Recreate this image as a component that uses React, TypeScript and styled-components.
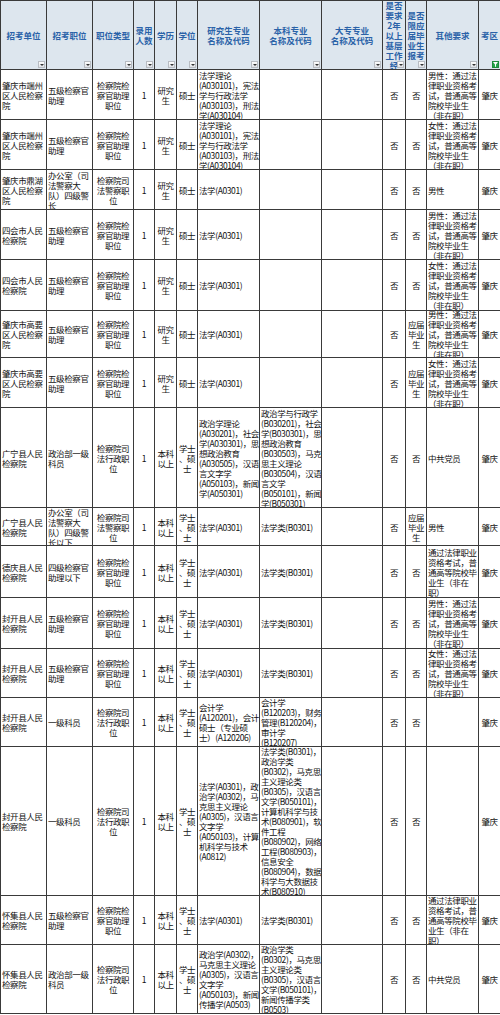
import React from "react";
import styled, { createGlobalStyle } from "styled-components";

type Align = "left" | "center";

const GlobalStyle = createGlobalStyle`
  html, body {
    margin: 0;
    padding: 0;
    background: #ffffff;
  }
`;

const Sheet = styled.table`
  width: 500px;
  table-layout: fixed;
  border-collapse: collapse;
  font-family: "Noto Sans CJK SC", "Noto Sans", sans-serif;
  font-size: 8.5px;
  letter-spacing: -0.4px;
  line-height: 10px;
  color: #111;
`;

const Col = styled.col<{ $w: number }>`
  width: ${({ $w }) => $w}px;
`;

const HeadCell = styled.th`
  padding: 0;
  border: 1px solid #3a3a3a;
  background: #dde6ee;
  color: #2a62a8;
  font-weight: 700;
  letter-spacing: 0;
`;

const HeadContent = styled.div`
  position: relative;
  height: 68px;
  display: flex;
  flex-direction: column;
  justify-content: center;
  text-align: center;
  white-space: pre;
  overflow: hidden;
`;

const FilterButton = styled.span<{ $active?: boolean }>`
  position: absolute;
  right: 1px;
  bottom: 1px;
  width: 7px;
  height: 7px;
  box-sizing: border-box;
  display: flex;
  align-items: center;
  justify-content: center;
  border: 1px solid ${({ $active }) => ($active ? "#1c8a3a" : "#b8bcc2")};
  background: ${({ $active }) =>
    $active ? "#22a449" : "linear-gradient(#fdfdfd, #dfe2e6)"};

  &::after {
    content: "";
    display: ${({ $active }) => ($active ? "none" : "block")};
    border-left: 2px solid transparent;
    border-right: 2px solid transparent;
    border-top: 2px solid #333;
  }
`;

const Cell = styled.td`
  padding: 0;
  border: 1px solid #3a3a3a;
  background: #ffffff;
`;

const CellContent = styled.div<{ $h: number; $align: Align }>`
  height: ${({ $h }) => $h - 1}px;
  padding: 0 1px;
  display: flex;
  flex-direction: column;
  justify-content: center;
  text-align: ${({ $align }) => $align};
  white-space: pre;
  overflow: hidden;
`;

const columns: { w: number; align: Align }[] = [
  { w: 46, align: "left" },
  { w: 46, align: "left" },
  { w: 41, align: "center" },
  { w: 21, align: "center" },
  { w: 22, align: "center" },
  { w: 21, align: "center" },
  { w: 62, align: "left" },
  { w: 62, align: "left" },
  { w: 61, align: "left" },
  { w: 23, align: "center" },
  { w: 21, align: "center" },
  { w: 52, align: "left" },
  { w: 22, align: "center" },
];

const headers = [
  "招考单位",
  "招考职位",
  "职位类型",
  "录用\n人数",
  "学历",
  "学位",
  "研究生专业\n名称及代码",
  "本科专业\n名称及代码",
  "大专专业\n名称及代码",
  "是否\n要求\n2年\n以上\n基层\n工作\n经",
  "是否\n限应\n届毕\n业生\n报考",
  "其他要求",
  "考区",
];

const AIDE = "五级检察官\n助理";
const AIDE_TYPE = "检察院检\n察官助理\n职位";
const POLICE_TYPE = "检察院司\n法警察职\n位";
const ADMIN_TYPE = "检察院司\n法行政职\n位";
const GRAD = "研究\n生";
const MASTER = "硕士";
const UNDERGRAD = "本科\n以上";
const DEGREES = "学士\n、硕\n士";
const LAW_A = "法学(A0301)";
const LAW_B = "法学类(B0301)";
const NO = "否";
const FRESH = "应届\n毕业\n生";
const ZQ = "肇庆";
const MALE = "男性：通过法\n律职业资格考\n试，普通高等\n院校毕业生\n（非在职）";
const FEMALE = "女性：通过法\n律职业资格考\n试，普通高等\n院校毕业生\n（非在职）";
const EXAM = "通过法律职业\n资格考试，普\n通高等院校毕\n业生（非在\n职）";
const THEORY =
  "法学理论\n(A030101)，宪法\n学与行政法学\n(A030103)，刑法\n学(A030104)";

const rows: { h: number; cells: string[] }[] = [
  {
    h: 50,
    cells: ["肇庆市端州\n区人民检察\n院", AIDE, AIDE_TYPE, "1", GRAD, MASTER, THEORY, "", "", NO, NO, MALE, ZQ],
  },
  {
    h: 50,
    cells: ["肇庆市端州\n区人民检察\n院", AIDE, AIDE_TYPE, "1", GRAD, MASTER, THEORY, "", "", NO, NO, FEMALE, ZQ],
  },
  {
    h: 40,
    cells: [
      "肇庆市鼎湖\n区人民检察\n院",
      "办公室（司\n法警察大\n队）四级警\n长",
      POLICE_TYPE, "1", GRAD, MASTER, LAW_A, "", "", NO, NO, "男性", ZQ,
    ],
  },
  {
    h: 50,
    cells: ["四会市人民\n检察院", AIDE, AIDE_TYPE, "1", GRAD, MASTER, LAW_A, "", "", NO, NO, MALE, ZQ],
  },
  {
    h: 51,
    cells: ["四会市人民\n检察院", AIDE, AIDE_TYPE, "1", GRAD, MASTER, LAW_A, "", "", NO, NO, FEMALE, ZQ],
  },
  {
    h: 47,
    cells: ["肇庆市高要\n区人民检察\n院", AIDE, AIDE_TYPE, "1", GRAD, MASTER, LAW_A, "", "", NO, FRESH, MALE, ZQ],
  },
  {
    h: 50,
    cells: ["肇庆市高要\n区人民检察\n院", AIDE, AIDE_TYPE, "1", GRAD, MASTER, LAW_A, "", "", NO, FRESH, FEMALE, ZQ],
  },
  {
    h: 100,
    cells: [
      "广宁县人民\n检察院",
      "政治部一级\n科员",
      ADMIN_TYPE, "1", UNDERGRAD, DEGREES,
      "政治学理论\n(A030201)，社会\n学(A030301)，思\n想政治教育\n(A030505)，汉语\n言文字学\n(A050103)，新闻\n学(A050301)",
      "政治学与行政学\n(B030201)，社会\n学(B030301)，思\n想政治教育\n(B030503)，马克\n思主义理论\n(B030504)，汉语\n言文学\n(B050101)，新闻\n学(B050301)",
      "", NO, NO, "中共党员", ZQ,
    ],
  },
  {
    h: 38,
    cells: [
      "广宁县人民\n检察院",
      "办公室（司\n法警察大\n队）四级警\n长以下",
      POLICE_TYPE, "1", UNDERGRAD, DEGREES, LAW_A, LAW_B, "", NO, FRESH, "男性", ZQ,
    ],
  },
  {
    h: 52,
    cells: ["德庆县人民\n检察院", "四级检察官\n助理以下", AIDE_TYPE, "1", UNDERGRAD, DEGREES, LAW_A, LAW_B, "", NO, NO, EXAM, ZQ],
  },
  {
    h: 51,
    cells: ["封开县人民\n检察院", AIDE, AIDE_TYPE, "1", UNDERGRAD, DEGREES, LAW_A, LAW_B, "", NO, NO, MALE, ZQ],
  },
  {
    h: 49,
    cells: ["封开县人民\n检察院", AIDE, AIDE_TYPE, "1", UNDERGRAD, DEGREES, LAW_A, LAW_B, "", NO, NO, FEMALE, ZQ],
  },
  {
    h: 49,
    cells: [
      "封开县人民\n检察院", "一级科员", ADMIN_TYPE, "1", UNDERGRAD, DEGREES,
      "会计学\n(A120201)，会计\n硕士（专业硕\n士）(A120206)",
      "会计学\n(B120203)，财务\n管理(B120204)，\n审计学\n(B120207)",
      "", NO, NO, "", ZQ,
    ],
  },
  {
    h: 149,
    cells: [
      "封开县人民\n检察院", "一级科员", ADMIN_TYPE, "1", UNDERGRAD, DEGREES,
      "法学(A0301)，政\n治学(A0302)，马\n克思主义理论\n(A0305)，汉语言\n文字学\n(A050103)，计算\n机科学与技术\n(A0812)",
      "法学类(B0301)，\n政治学类\n(B0302)，马克思\n主义理论类\n(B0305)，汉语言\n文学(B050101)，\n计算机科学与技\n术(B080901)，软\n件工程\n(B080902)，网络\n工程(B080903)，\n信息安全\n(B080904)，数据\n科学与大数据技\n术(B080910)",
      "", NO, NO, "", ZQ,
    ],
  },
  {
    h: 49,
    cells: ["怀集县人民\n检察院", AIDE, AIDE_TYPE, "1", UNDERGRAD, DEGREES, LAW_A, LAW_B, "", NO, NO, EXAM, ZQ],
  },
  {
    h: 69,
    cells: [
      "怀集县人民\n检察院", "政治部一级\n科员", ADMIN_TYPE, "1", UNDERGRAD, DEGREES,
      "政治学(A0302)，\n马克思主义理论\n(A0305)，汉语言\n文字学\n(A050103)，新闻\n传播学(A0503)",
      "政治学类\n(B0302)，马克思\n主义理论类\n(B0305)，汉语言\n文学(B050101)，\n新闻传播学类\n(B0503)",
      "", NO, NO, "中共党员", ZQ,
    ],
  },
];

const FunnelIcon: React.FC = () => (
  <svg width="5" height="5" viewBox="0 0 10 10">
    <path d="M0 0 H10 L6 5 V10 L4 9 V5 Z" fill="#ffffff" />
  </svg>
);

const App: React.FC = () => {
  return (
    <>
      <GlobalStyle />
      <Sheet>
        <colgroup>
          {columns.map((c, i) => (
            <Col key={i} $w={c.w} />
          ))}
        </colgroup>
        <thead>
          <tr>
            {headers.map((h, i) => (
              <HeadCell key={i}>
                <HeadContent>
                  {h}
                  {i === headers.length - 1 ? (
                    <FilterButton $active>
                      <FunnelIcon />
                    </FilterButton>
                  ) : (
                    <FilterButton />
                  )}
                </HeadContent>
              </HeadCell>
            ))}
          </tr>
        </thead>
        <tbody>
          {rows.map((r, ri) => (
            <tr key={ri}>
              {r.cells.map((c, ci) => (
                <Cell key={ci}>
                  <CellContent $h={r.h} $align={columns[ci].align}>
                    {c}
                  </CellContent>
                </Cell>
              ))}
            </tr>
          ))}
        </tbody>
      </Sheet>
    </>
  );
};

export default App;
